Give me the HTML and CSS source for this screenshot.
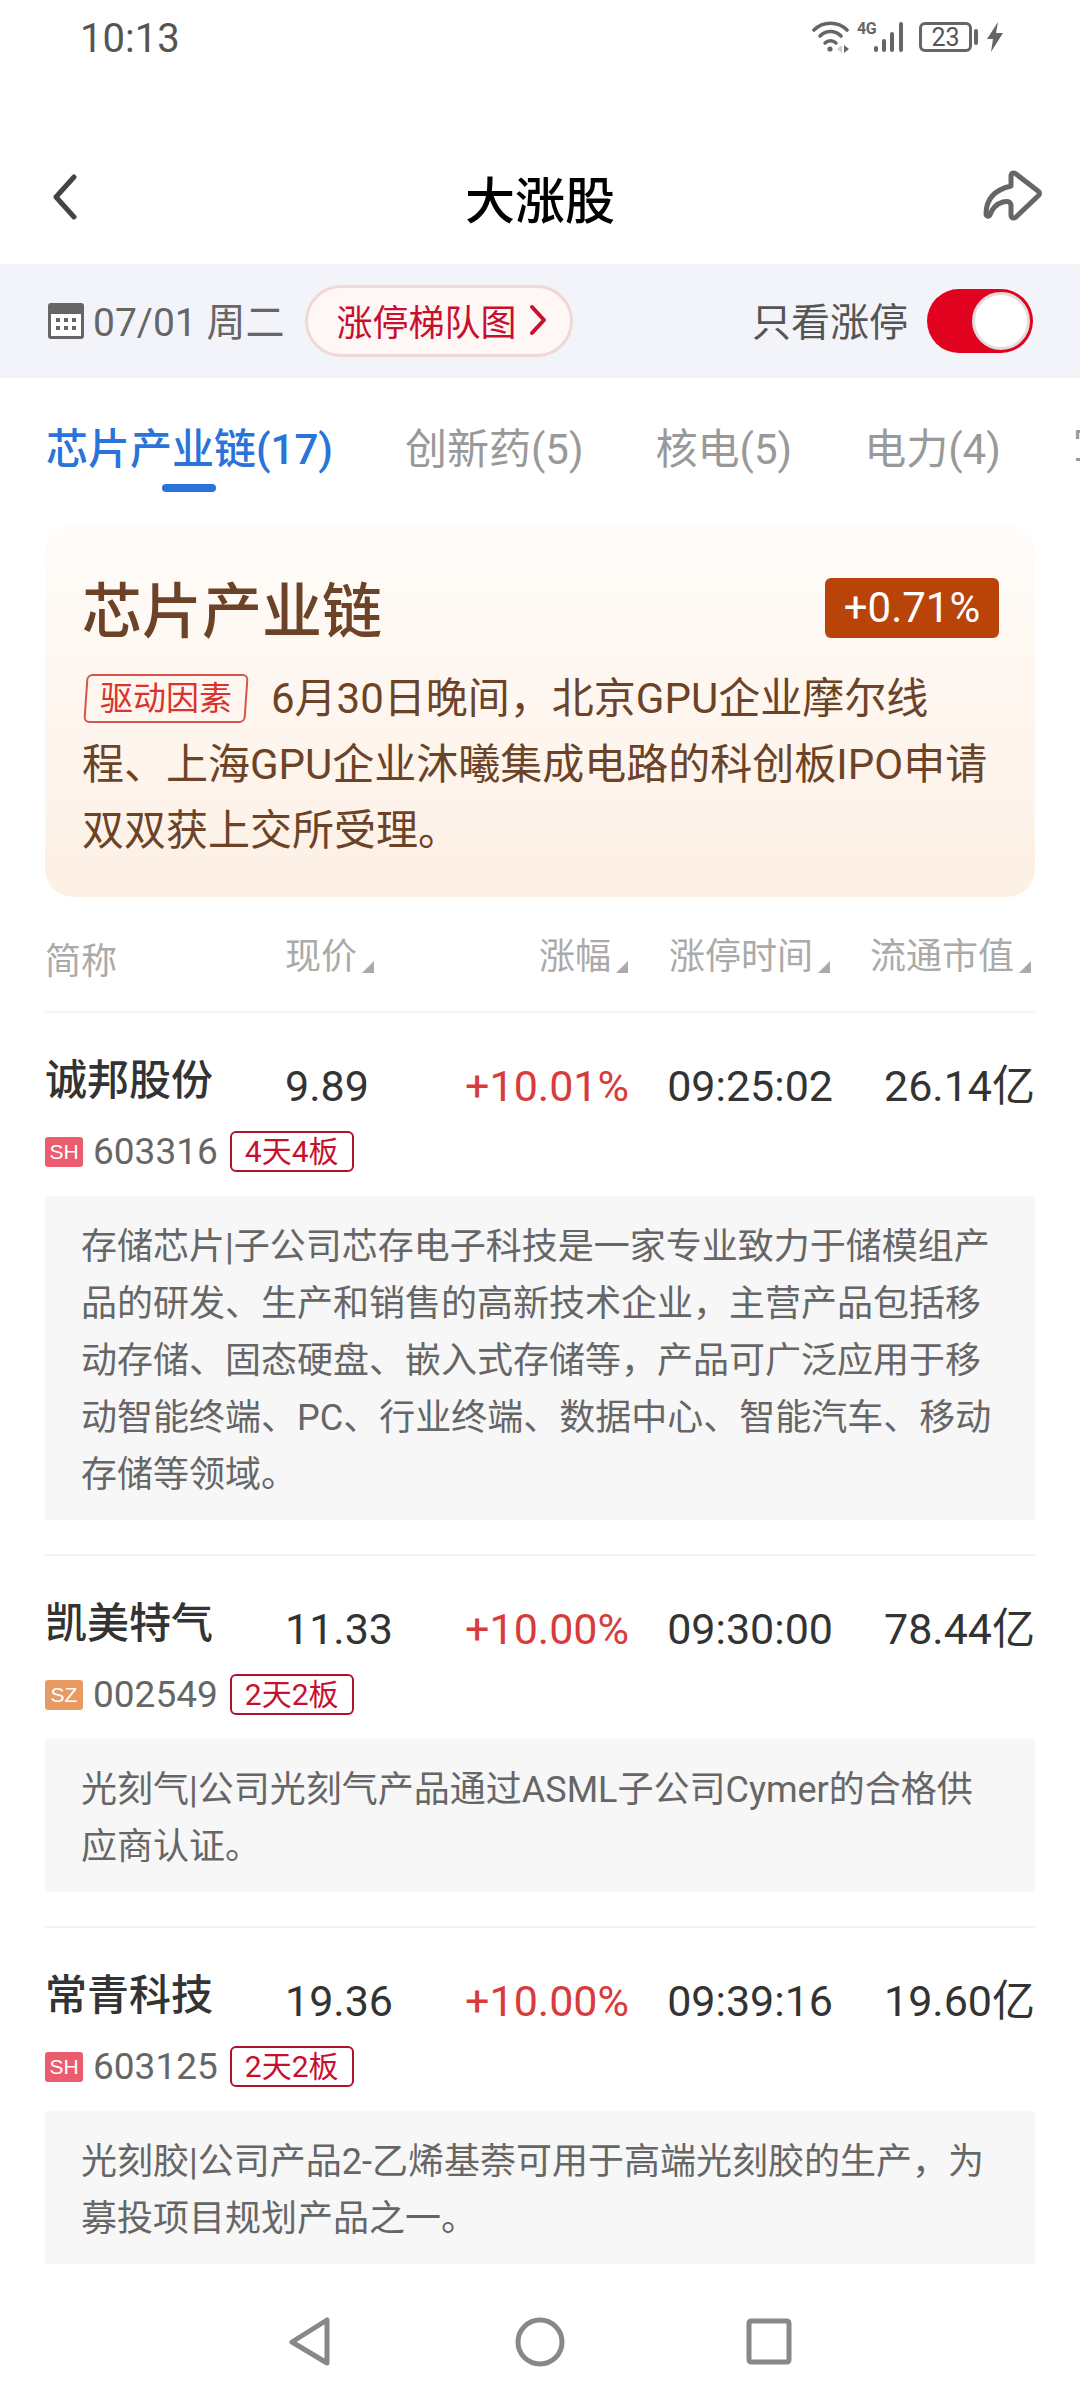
FILE: index.html
```html
<!DOCTYPE html>
<html lang="zh-CN">
<head>
    <meta charset="UTF-8">
    <meta name="viewport" content="width=device-width, initial-scale=1.0">
    <title>大涨股</title>
    <link rel="stylesheet" href="styles.css">
</head>
<body>
<div class="page">
    <!-- status bar -->
    <div class="status">
        <span class="status-time">10:13</span>
        <div class="status-icons">
            <svg class="ic-wifi" width="38" height="34" viewBox="0 0 38 34" fill="none" stroke="#666" stroke-linecap="round">
                <path d="M2 10C11 1 26 1 35 10" stroke-width="3.6"/>
                <path d="M8 16C14 10 23 10 29 16" stroke-width="3.6"/>
                <path d="M13 23C16 20 21 20 24 23" stroke-width="3.4"/>
                <circle cx="18" cy="29" r="2.6" fill="#666" stroke="none"/>
                <path d="M30 25l-5 4 5 4z" fill="#ccc" stroke="none"/>
                <path d="M32 25l5 4-5 4z" fill="#666" stroke="none"/>
            </svg>
            <div class="ic-cell">
                <span class="ic-4g">4G</span>
                <svg width="34" height="32" viewBox="0 0 34 32" fill="#666">
                    <rect x="1" y="25" width="4" height="6" rx="2"/>
                    <rect x="9" y="18" width="4" height="13" rx="2"/>
                    <rect x="17" y="11" width="4" height="20" rx="2"/>
                    <rect x="26" y="1" width="4" height="30" rx="2"/>
                </svg>
            </div>
            <div class="battery"><span>23</span></div>
            <span class="battery-cap"></span>
            <svg class="ic-bolt" width="16" height="30" viewBox="0 0 16 30" fill="#666">
                <path d="M11 0L0 17h6L4 30 16 11H9z"/>
            </svg>
        </div>
    </div>

    <!-- title bar -->
    <div class="nav">
        <svg class="nav-back" width="26" height="46" viewBox="0 0 26 46" fill="none" stroke="#444" stroke-width="5" stroke-linecap="round" stroke-linejoin="round">
            <path d="M22 3L4 23l18 20"/>
        </svg>
        <h1 class="nav-title">大涨股</h1>
        <svg class="nav-share" width="60" height="56" viewBox="0 0 60 56" fill="none" stroke="#666" stroke-width="5" stroke-linejoin="round">
            <path d="M28 7c0-3 3-4 5-2l22 17c2 1 2 3 0 5L33 48c-2 2-5 1-5-2V36c-1-4-4-4-8-3-7 2-11 7-13 13-1 2-4 1-4-1 0-14 8-24 25-28z"/>
        </svg>
    </div>

    <!-- date filter -->
    <div class="filter">
        <svg class="cal" width="36" height="36" viewBox="0 0 36 36">
            <rect width="36" height="36" rx="3" fill="#666"/>
            <rect x="3" y="11" width="30" height="22" fill="#fff"/>
            <g fill="#666">
                <rect x="8" y="15" width="4" height="4"/><rect x="16" y="15" width="4" height="4"/><rect x="24" y="15" width="4" height="4"/>
                <rect x="8" y="23" width="4" height="4"/><rect x="16" y="23" width="4" height="4"/><rect x="24" y="23" width="4" height="4"/>
            </g>
        </svg>
        <span class="filter-date">07/01 周二</span>
        <div class="pill">
            <span>涨停梯队图</span>
            <svg width="18" height="32" viewBox="0 0 18 32" fill="none" stroke="#c8102e" stroke-width="4" stroke-linecap="round" stroke-linejoin="round">
                <path d="M3 3l12 13L3 29"/>
            </svg>
        </div>
        <span class="filter-label">只看涨停</span>
        <div class="switch"><span class="switch-knob"></span></div>
    </div>

    <!-- plate tabs -->
    <div class="tabs">
        <div class="tab active">芯片产业链(17)</div>
        <div class="tab">创新药(5)</div>
        <div class="tab">核电(5)</div>
        <div class="tab">电力(4)</div>
        <div class="tab">军工(4)</div>
    </div>

    <!-- plate summary -->
    <div class="plate">
        <div class="plate-head">
            <h2 class="plate-name">芯片产业链</h2>
            <span class="plate-rate">+0.71%</span>
        </div>
        <p class="plate-desc"><span class="driver">驱动因素</span>6月30日晚间，北京GPU企业摩尔线程、上海GPU企业沐曦集成电路的科创板IPO申请双双获上交所受理。</p>
    </div>

    <!-- table head -->
    <div class="thead grid">
        <span class="th-name">简称</span>
        <span class="th th-left">现价<i class="caret"></i></span>
        <span class="th th-rate">涨幅<i class="caret"></i></span>
        <span class="th th-time">涨停时间<i class="caret"></i></span>
        <span class="th th-last">流通市值<i class="caret"></i></span>
    </div>

    <!-- stock list -->
    <div class="list">
        <div class="stock">
            <div class="grid stock-main">
                <span class="stock-name">诚邦股份</span>
                <span class="num">9.89</span>
                <span class="num up">+10.01%</span>
                <span class="num right">09:25:02</span>
                <span class="num right">26.14亿</span>
            </div>
            <div class="stock-meta">
                <span class="market sh">SH</span>
                <span class="code">603316</span>
                <span class="boards">4天4板</span>
            </div>
            <p class="reason">存储芯片|子公司芯存电子科技是一家专业致力于储模组产品的研发、生产和销售的高新技术企业，主营产品包括移动存储、固态硬盘、嵌入式存储等，产品可广泛应用于移动智能终端、PC、行业终端、数据中心、智能汽车、移动存储等领域。</p>
        </div>
        <div class="stock">
            <div class="grid stock-main">
                <span class="stock-name">凯美特气</span>
                <span class="num">11.33</span>
                <span class="num up">+10.00%</span>
                <span class="num right">09:30:00</span>
                <span class="num right">78.44亿</span>
            </div>
            <div class="stock-meta">
                <span class="market sz">SZ</span>
                <span class="code">002549</span>
                <span class="boards">2天2板</span>
            </div>
            <p class="reason">光刻气|公司光刻气产品通过ASML子公司Cymer的合格供应商认证。</p>
        </div>
        <div class="stock">
            <div class="grid stock-main">
                <span class="stock-name">常青科技</span>
                <span class="num">19.36</span>
                <span class="num up">+10.00%</span>
                <span class="num right">09:39:16</span>
                <span class="num right">19.60亿</span>
            </div>
            <div class="stock-meta">
                <span class="market sh">SH</span>
                <span class="code">603125</span>
                <span class="boards">2天2板</span>
            </div>
            <p class="reason">光刻胶|公司产品2-乙烯基萘可用于高端光刻胶的生产，为募投项目规划产品之一。</p>
        </div>
    </div>

    <!-- system navigation -->
    <div class="sysnav">
        <svg width="60" height="60" viewBox="0 0 60 60" fill="none" stroke="#888" stroke-width="5" stroke-linejoin="round">
            <path d="M47 8v43L12 30z"/>
        </svg>
        <svg width="60" height="60" viewBox="0 0 60 60" fill="none" stroke="#888" stroke-width="5">
            <circle cx="30" cy="30" r="22"/>
        </svg>
        <svg width="60" height="60" viewBox="0 0 60 60" fill="none" stroke="#888" stroke-width="5" stroke-linejoin="round">
            <rect x="9" y="9" width="40" height="41" rx="2"/>
        </svg>
    </div>
</div>
</body>
</html>
```

FILE: styles.css
```css
body {
    font-family: Roboto, "Noto Sans CJK SC", sans-serif;
    margin: 0;
    padding: 0;
    background-color: #fff;
}

h1, h2, p {
    margin: 0;
    font-weight: normal;
}

.page {
    width: 1080px;
    height: 2400px;
    display: flex;
    flex-direction: column;
    overflow: hidden;
}

/* status bar */
.status {
    height: 74px;
    display: flex;
    align-items: center;
    justify-content: space-between;
    padding: 0 77px 0 80px;
    box-sizing: border-box;
}

.status-time {
    padding-top: 3px;
    font-size: 40px;
    color: #555;
}

.status-icons {
    display: flex;
    align-items: center;
}

.ic-wifi {
    margin-right: 7px;
}

.ic-cell {
    display: flex;
    align-items: flex-start;
    margin-right: 12px;
}

.ic-4g {
    width: 16px;
    font-size: 16px;
    font-weight: 700;
    line-height: 16px;
    letter-spacing: -0.5px;
    color: #666;
}

.battery {
    width: 53px;
    height: 30px;
    border: 3px solid #666;
    border-radius: 6px;
    box-sizing: border-box;
    display: flex;
    align-items: center;
    justify-content: center;
    font-size: 25px;
    color: #555;
}

.battery-cap {
    width: 4px;
    height: 16px;
    margin: 0 9px 0 2px;
    background-color: #666;
    border-radius: 2px;
}

/* title bar */
.nav {
    height: 190px;
    padding: 56px 37px 0;
    box-sizing: border-box;
    display: grid;
    grid-template-columns: 1fr auto 1fr;
    align-items: center;
}

.nav-back {
    margin-left: 15px;
}

.nav-share {
    justify-self: end;
}

.nav-title {
    font-size: 50px;
    font-weight: 500;
    color: #000;
}

/* date filter */
.filter {
    height: 114px;
    padding: 0 47px 0 48px;
    box-sizing: border-box;
    display: flex;
    align-items: center;
    background-color: #f2f4f9;
}

.filter-date {
    margin-left: 9px;
    padding-bottom: 5px;
    font-size: 39px;
    color: #666;
}

.pill {
    height: 72px;
    margin-left: 21px;
    padding: 0 23px 2px 28px;
    box-sizing: border-box;
    display: flex;
    align-items: center;
    gap: 13px;
    border: 3px solid #f0d8d8;
    border-radius: 36px;
    background-color: #fff6f6;
    font-size: 36px;
    color: #c8102e;
}

.filter-label {
    margin-left: auto;
    padding-bottom: 5px;
    font-size: 39px;
    color: #555;
}

.switch {
    width: 106px;
    height: 64px;
    margin-left: 19px;
    padding: 3px;
    box-sizing: border-box;
    display: flex;
    justify-content: flex-end;
    background-color: #e0021f;
    border-radius: 32px;
}

.switch-knob {
    width: 58px;
    height: 58px;
    box-sizing: border-box;
    background-color: #fff;
    border: 3px solid #e2dcdc;
    border-radius: 50%;
}

/* plate tabs */
.tabs {
    height: 147px;
    padding: 47px 0 0 46px;
    box-sizing: border-box;
    display: flex;
    gap: 72px;
    white-space: nowrap;
    overflow: hidden;
}

.tab {
    display: flex;
    flex-direction: column;
    align-items: center;
    font-size: 42px;
    line-height: 50px;
    color: #999;
}

.tab.active {
    color: #2a73d9;
    font-weight: 500;
}

.tab.active::after {
    content: "";
    width: 54px;
    height: 8px;
    margin-top: 9px;
    background-color: #2a73d9;
    border-radius: 4px;
}

/* plate summary */
.plate {
    height: 372px;
    margin: 0 45px;
    padding: 53px 36px 0 37px;
    box-sizing: border-box;
    background: linear-gradient(#fffcf9, #fdf0e5);
    border-radius: 28px;
    color: #6c4327;
}

.plate-head {
    display: flex;
    justify-content: space-between;
    height: 70px;
}

.plate-name {
    font-size: 60px;
    font-weight: 500;
    line-height: 70px;
}

.plate-rate {
    height: 60px;
    width: 174px;
    background-color: #b8440a;
    border-radius: 6px;
    text-align: center;
    font-size: 42px;
    line-height: 60px;
    color: #fff;
}

.plate-desc {
    margin-top: 18px;
    font-size: 42px;
    line-height: 66px;
}

.driver {
    position: relative;
    display: inline-block;
    margin: 0 24px 0 3px;
    padding: 0 15px;
    font-size: 33px;
    line-height: 49px;
    vertical-align: 3px;
    color: #d9342b;
}

.driver::before {
    content: "";
    position: absolute;
    top: 0;
    right: 0;
    bottom: 0;
    left: 0;
    border: 2px solid #d9534c;
    border-radius: 6px;
    transform: skewX(-4deg);
}

/* table */
.grid {
    display: grid;
    grid-template-columns: 240px 120px 224px 204px 202px;
    margin: 0 45px;
}

.thead {
    height: 116px;
    padding: 38px 0 0;
    box-sizing: border-box;
    border-bottom: 2px solid #f4f4f4;
    font-size: 36px;
    line-height: 44px;
    color: #aaa;
    grid-template-rows: 44px;
}

.th-name {
    line-height: 54px;
}

.th {
    display: flex;
    align-items: flex-end;
    justify-content: flex-end;
}

.th-left {
    justify-content: flex-start;
}

.th-rate {
    padding-right: 1px;
}

.th-time {
    padding-right: 3px;
}

.th-last {
    padding-right: 4px;
}

.caret {
    width: 12px;
    height: 12px;
    margin: 0 0 6px 5px;
    background-color: #aaa;
    clip-path: polygon(100% 0, 100% 100%, 0 100%);
}

.list {
    flex: 1;
    overflow: hidden;
}

.stock {
    margin: 0 45px;
    padding: 47px 0 34px;
    border-bottom: 2px solid #f4f4f4;
}

.stock-main {
    margin: 0;
    height: 45px;
}

.stock-name {
    font-size: 42px;
    font-weight: 500;
    line-height: 42px;
    color: #333;
}

.num {
    font-size: 43px;
    line-height: 52px;
    color: #333;
}

.num.right, .num.up {
    text-align: right;
}

.num.up {
    color: #d93a3a;
}

.stock-meta {
    display: flex;
    align-items: center;
    margin-top: 26px;
    height: 41px;
}

.market {
    width: 38px;
    height: 30px;
    border-radius: 3px;
    text-align: center;
    font-family: "Liberation Sans", sans-serif;
    font-size: 21px;
    line-height: 30px;
    color: #fff;
}

.market.sh {
    background-color: #eb5c6e;
}

.market.sz {
    background-color: #e89a63;
}

.code {
    margin-left: 10px;
    font-size: 37px;
    color: #666;
}

.boards {
    height: 41px;
    margin-left: 12px;
    padding: 0 13px;
    box-sizing: border-box;
    border: 2px solid #b3102e;
    border-radius: 6px;
    font-size: 30px;
    line-height: 37px;
    color: #c8102e;
}

.reason {
    margin-top: 24px;
    padding: 23px 37px 16px 36px;
    background-color: #f7f7f7;
    font-size: 36px;
    line-height: 57px;
    color: #666;
}

/* system navigation */
.sysnav {
    height: 135px;
    padding-top: 18px;
    box-sizing: border-box;
    display: flex;
    justify-content: center;
    align-items: center;
    gap: 170px;
    background-color: #fff;
}
```
